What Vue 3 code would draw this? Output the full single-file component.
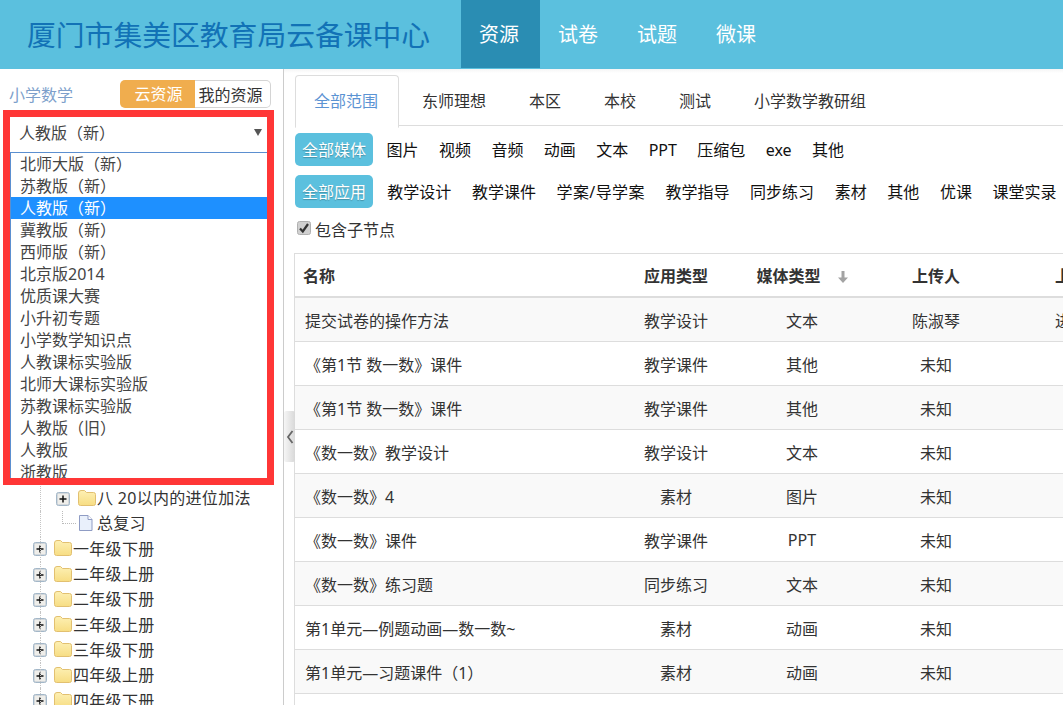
<template>
  <div class="page">
    <header class="topbar">
      <h1 class="title">厦门市集美区教育局云备课中心</h1>
      <nav class="topnav">
        <a
          v-for="item in navItems"
          :key="item"
          href="#"
          :class="{ active: item === '资源' }"
          @click.prevent
        >{{ item }}</a>
      </nav>
    </header>

    <div class="content">
      <aside class="sidebar">
        <div class="side-head">
          <span class="subject">小学数学</span>
          <div class="switch">
            <a href="#" class="on" @click.prevent>云资源</a>
            <a href="#" @click.prevent>我的资源</a>
          </div>
        </div>

        <div class="picker">
          <div class="picker-value">
            人教版（新）
            <i class="caret"></i>
          </div>
          <ul class="picker-list">
            <li
              v-for="item in versions"
              :key="item"
              :class="{ selected: item === '人教版（新）' }"
            >{{ item }}</li>
          </ul>
        </div>

        <ul class="tree">
          <li
            v-for="node in treeNodes"
            :key="node.label"
            :class="['tree-row', 'level-' + node.level]"
          >
            <svg v-if="node.folder" class="expander" viewBox="0 0 14 14">
              <rect x="0.500" y="0.500" width="13" height="13" rx="2" fill="#d3d8dc" stroke="#a3b7c8" />
              <rect x="2" y="2" width="10" height="10" fill="#efeeea" />
              <path d="M3.500 7h7M7 3.500v7" stroke="#111" stroke-width="1.500" />
            </svg>
            <span v-else class="elbow"></span>
            <svg v-if="node.folder" class="node-icon" viewBox="0 0 18 16">
              <defs>
                <linearGradient id="folderFill" x1="0" y1="0" x2="0" y2="1">
                  <stop offset="0" stop-color="#fdf0b4" />
                  <stop offset="1" stop-color="#f7dd83" />
                </linearGradient>
              </defs>
              <path d="M0.500 3Q0.500 0.500 3 0.500h3.500L8.500 2.500H15.500Q17.500 2.500 17.500 4.500V13.500Q17.500 15.500 15.500 15.500H2.500Q0.500 15.500 0.500 13.500Z" fill="url(#folderFill)" stroke="#e2c070" />
            </svg>
            <svg v-else class="node-icon" viewBox="0 0 18 16">
              <path d="M1.500 0.500H10L14 4.500V15.500H1.500Z" fill="#e9f0fb" stroke="#8f9cc4" />
              <path d="M10 0.500V4.500H14" fill="#fff" stroke="#8f9cc4" />
            </svg>
            <span class="node-label">{{ node.label }}</span>
          </li>
        </ul>
      </aside>

      <main class="main">
        <div class="handle">
          <svg viewBox="0 0 8 14" width="8" height="14">
            <path d="M6.500 1L2 7l4.500 6" fill="none" stroke="#666" stroke-width="1.800" />
          </svg>
        </div>

        <ul class="tabs">
          <li
            v-for="tab in scopes"
            :key="tab"
            :class="{ active: tab === '全部范围' }"
          >{{ tab }}</li>
        </ul>

        <div class="filter first">
          <a
            v-for="item in mediaFilters"
            :key="item"
            href="#"
            :class="{ active: item === '全部媒体' }"
            @click.prevent
          >{{ item }}</a>
        </div>
        <div class="filter second">
          <a
            v-for="item in useFilters"
            :key="item"
            href="#"
            :class="{ active: item === '全部应用' }"
            @click.prevent
          >{{ item }}</a>
        </div>

        <label class="include">
          <svg viewBox="0 0 14 14" width="14" height="14">
            <rect x="0.500" y="0.500" width="13" height="13" rx="2" fill="#d0d0d0" stroke="#b0b0b0" />
            <path d="M3 7.500l2.800 3L11 3" fill="none" stroke="#333" stroke-width="2.200" />
          </svg>
          包含子节点
        </label>

        <table class="grid">
          <colgroup>
            <col class="col-name" />
            <col class="col-use" />
            <col class="col-media" />
            <col class="col-user" />
            <col class="col-unit" />
          </colgroup>
          <thead>
            <tr>
              <th class="name">名称</th>
              <th>应用类型</th>
              <th>
                媒体类型
                <svg class="sort" viewBox="0 0 10 12" width="10" height="12">
                  <path d="M3.500 0h3v6.500H10L5 12 0 6.500h3.500z" fill="#a3a3a3" />
                </svg>
              </th>
              <th>上传人</th>
              <th class="unit">上传单位</th>
            </tr>
          </thead>
          <tbody>
            <tr v-for="row in rows" :key="row.name">
              <td class="name">{{ row.name }}</td>
              <td>{{ row.use }}</td>
              <td>{{ row.media }}</td>
              <td>{{ row.user }}</td>
              <td class="unit">{{ row.unit }}</td>
            </tr>
            <tr class="empty"><td colspan="5"></td></tr>
          </tbody>
        </table>
      </main>
    </div>
  </div>
</template>

<script setup>
const navItems = ["资源", "试卷", "试题", "微课"];

const versions = [
  "北师大版（新）",
  "苏教版（新）",
  "人教版（新）",
  "冀教版（新）",
  "西师版（新）",
  "北京版2014",
  "优质课大赛",
  "小升初专题",
  "小学数学知识点",
  "人教课标实验版",
  "北师大课标实验版",
  "苏教课标实验版",
  "人教版（旧）",
  "人教版",
  "浙教版",
];

const treeNodes = [
  { label: "八 20以内的进位加法", level: 2, folder: true },
  { label: "总复习", level: 2, folder: false },
  { label: "一年级下册", level: 1, folder: true },
  { label: "二年级上册", level: 1, folder: true },
  { label: "二年级下册", level: 1, folder: true },
  { label: "三年级上册", level: 1, folder: true },
  { label: "三年级下册", level: 1, folder: true },
  { label: "四年级上册", level: 1, folder: true },
  { label: "四年级下册", level: 1, folder: true },
];

const scopes = ["全部范围", "东师理想", "本区", "本校", "测试", "小学数学教研组"];
const mediaFilters = ["全部媒体", "图片", "视频", "音频", "动画", "文本", "PPT", "压缩包", "exe", "其他"];
const useFilters = ["全部应用", "教学设计", "教学课件", "学案/导学案", "教学指导", "同步练习", "素材", "其他", "优课", "课堂实录"];

const rows = [
  { name: "提交试卷的操作方法", use: "教学设计", media: "文本", user: "陈淑琴", unit: "进修学校" },
  { name: "《第1节 数一数》课件", use: "教学课件", media: "其他", user: "未知", unit: "" },
  { name: "《第1节 数一数》课件 ", use: "教学课件", media: "其他", user: "未知", unit: "" },
  { name: "《数一数》教学设计", use: "教学设计", media: "文本", user: "未知", unit: "" },
  { name: "《数一数》4", use: "素材", media: "图片", user: "未知", unit: "" },
  { name: "《数一数》课件", use: "教学课件", media: "PPT", user: "未知", unit: "" },
  { name: "《数一数》练习题", use: "同步练习", media: "文本", user: "未知", unit: "" },
  { name: "第1单元—例题动画—数一数~", use: "素材", media: "动画", user: "未知", unit: "" },
  { name: "第1单元—习题课件（1）", use: "素材", media: "动画", user: "未知", unit: "" },
];
</script>

<style>
html,
body {
  margin: 0;
  overflow: hidden;
}
</style>

<style scoped>
.page {
  width: 1063px;
  height: 705px;
  overflow: hidden;
  font-family: "Noto Sans", "Noto Sans CJK SC", sans-serif;
  font-size: 16px;
  color: #333;
  background: #fff;
}

.topbar {
  display: flex;
  height: 69px;
  background: #5bc0de;
}
.title {
  width: 461px;
  box-sizing: border-box;
  margin: 0;
  padding-left: 27px;
  font-size: 28.800px;
  font-weight: 400;
  line-height: 69px;
  color: #1272b6;
}
.topnav {
  display: flex;
}
.topnav a {
  box-sizing: border-box;
  width: 79px;
  padding-right: 3px;
  text-align: center;
  line-height: 69px;
  font-size: 20px;
  color: #fff;
  text-decoration: none;
}
.topnav a.active {
  height: 68px;
  background: #2a8db3;
}

.content {
  display: flex;
}

.sidebar {
  position: relative;
  flex: none;
  width: 283px;
  height: 636px;
  border-right: 1px solid #ccc;
  overflow: hidden;
}
.side-head {
  display: flex;
  align-items: center;
  justify-content: space-between;
  padding: 11px 12px 0 9px;
}
.subject {
  color: #7d9fcb;
}
.switch {
  display: flex;
  height: 28px;
  line-height: 29px;
}
.switch a {
  box-sizing: border-box;
  width: 76px;
  padding-right: 4px;
  text-align: center;
  color: #333;
  text-decoration: none;
  border: 1px solid #d4d4d4;
  border-left: 0;
  border-radius: 0 5px 5px 0;
}
.switch a.on {
  width: 75px;
  padding: 0 0 0 2px;
  color: #fff;
  background: #f0ad4e;
  border: 0;
  border-radius: 5px 0 0 5px;
}

.picker {
  position: absolute;
  top: 41px;
  left: 3px;
  z-index: 2;
  box-sizing: border-box;
  width: 271px;
  height: 375px;
  border: 7px solid #ff3636;
  background: #fff;
  overflow: hidden;
}
.picker-value {
  position: relative;
  height: 35px;
  padding-left: 9px;
  line-height: 33px;
  color: #444;
  border-bottom: 1px solid #5b8fd0;
}
.caret {
  position: absolute;
  top: 12px;
  right: 5px;
  border-top: 7px solid #555;
  border-left: 4px solid transparent;
  border-right: 4px solid transparent;
}
.picker-list {
  margin: 0;
  padding: 0;
  list-style: none;
  border-left: 1px solid #5b8fd0;
}
.picker-list li {
  height: 22px;
  padding-left: 9px;
  line-height: 22px;
  color: #444;
}
.picker-list li.selected {
  color: #fff;
  background: #1e90ff;
}

.tree {
  margin: 378px 0 0;
  padding: 0;
  list-style: none;
}
.tree-row {
  position: relative;
  display: flex;
  align-items: center;
  height: 25.300px;
  line-height: 25px;
  letter-spacing: 0.300px;
  white-space: nowrap;
}
.tree-row.level-1 {
  padding-left: 33px;
}
.tree-row.level-2 {
  padding-left: 56px;
}
.tree-row::before {
  content: "";
  position: absolute;
  top: 0;
  bottom: 0;
  left: 40px;
  border-left: 1px dotted #c4c4c4;
}
.expander {
  flex: none;
  width: 14px;
  height: 14px;
}
.elbow {
  flex: none;
  box-sizing: border-box;
  width: 14px;
  height: 13px;
  margin: -6px 0 6px;
  border-left: 1px dotted #bbb;
  border-bottom: 1px dotted #bbb;
  transform: translateX(6px);
}
.node-icon {
  flex: none;
  width: 18px;
  height: 16px;
  margin: 0 1px 2px 7px;
}
.level-2 .node-icon {
  margin-left: 8px;
}

.main {
  position: relative;
  flex: none;
  width: 779px;
  box-sizing: border-box;
  padding: 6px 0 0 11px;
  overflow: hidden;
  background: linear-gradient(#f5f5f5, #fff 4px);
}
.handle {
  position: absolute;
  top: 342px;
  left: 0;
  z-index: 1;
  display: flex;
  align-items: center;
  justify-content: center;
  width: 11px;
  height: 51px;
  border-radius: 2px;
  background: linear-gradient(to right, #f6f6f6, #d8d8d8);
}

.tabs {
  display: flex;
  height: 50px;
  margin: 0;
  padding: 0;
  list-style: none;
  border-bottom: 1px solid #ddd;
  white-space: nowrap;
}
.tabs li {
  height: 50px;
  padding: 0 19px;
  margin-right: 3px;
  border: 1px solid transparent;
  line-height: 50px;
  color: #333;
}
.tabs li.active {
  height: 51px;
  padding: 0 20px 0 18px;
  color: #5b93d3;
  background: #fff;
  border-color: #ddd #ddd #fff;
  border-radius: 4px 4px 0 0;
}

.filter {
  display: flex;
  align-items: center;
  gap: 4px;
  height: 33px;
  margin-top: 9px;
  white-space: nowrap;
}
.filter.first {
  gap: 3.800px;
  margin-top: 7px;
}
.filter a {
  height: 33px;
  padding: 0 8.300px;
  line-height: 35px;
  color: #111;
  text-decoration: none;
}
.filter a.active {
  padding: 0 7px;
  margin-right: 1.500px;
  color: #fff;
  background: #5bc0de;
  border-radius: 5px;
  text-shadow: 0 1px 1px rgba(0, 0, 0, 0.25);
}
.filter.second a.active {
  margin-right: 2px;
}
.filter.second a:nth-child(4) {
  letter-spacing: 0.400px;
}

.include {
  display: flex;
  align-items: center;
  gap: 4px;
  height: 24px;
  margin: 9px 0 0 2px;
}
.include svg {
  margin: -3px 0 0 0;
}

.grid {
  width: 980px;
  margin: 12px 0 0 -1px;
  table-layout: fixed;
  border-collapse: separate;
  border-spacing: 0;
  border-top: 1px solid #ddd;
  border-left: 1px solid #ddd;
}
.col-name {
  width: 325px;
}
.col-use {
  width: 112px;
}
.col-media {
  width: 140px;
}
.col-user {
  width: 128px;
}
.grid th,
.grid td {
  height: 43px;
  padding: 0;
  text-align: center;
  white-space: nowrap;
  overflow: hidden;
  border-bottom: 1px solid #ddd;
}
.grid th {
  height: 42px;
  font-weight: 700;
  border-bottom-width: 2px;
}
.grid th.name {
  padding-left: 8px;
  text-align: left;
}
.grid td.name {
  padding-left: 10px;
  text-align: left;
}
.grid th.unit,
.grid td.unit {
  padding-left: 55px;
  text-align: left;
}
.grid tbody tr:nth-child(odd) td {
  background: #f9f9f9;
}
.grid tbody tr.empty td {
  background: #fff;
}
.sort {
  margin-left: 13px;
  vertical-align: -1px;
}
</style>
